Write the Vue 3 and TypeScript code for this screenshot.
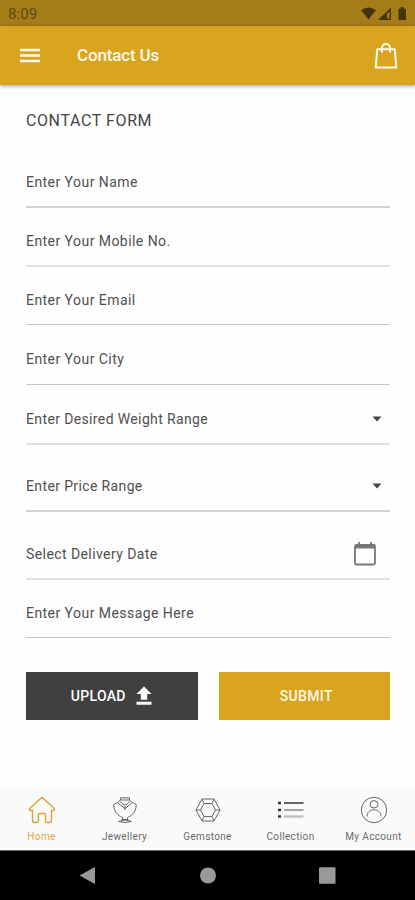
<script setup lang="ts">
import { ref } from 'vue'

type Trailing = 'none' | 'caret' | 'calendar'
interface Field { label: string; height: number; rule: string; trailing: Trailing }
interface Tab { id: string; label: string }

const fields: Field[] = [
  { label: 'Enter Your Name', height: 60, rule: 'normal', trailing: 'none' },
  { label: 'Enter Your Mobile No.', height: 59, rule: 'soft', trailing: 'none' },
  { label: 'Enter Your Email', height: 58, rule: 'thin', trailing: 'none' },
  { label: 'Enter Your City', height: 60, rule: 'thin raised', trailing: 'none' },
  { label: 'Enter Desired Weight Range', height: 60, rule: 'soft', trailing: 'caret' },
  { label: 'Enter Price Range', height: 67, rule: 'normal', trailing: 'caret' },
  { label: 'Select Delivery Date', height: 68, rule: 'soft', trailing: 'calendar' },
  { label: 'Enter Your Message Here', height: 58, rule: 'thin', trailing: 'none' },
]
const tabs: Tab[] = [
  { id: 'home', label: 'Home' },
  { id: 'jewellery', label: 'Jewellery' },
  { id: 'gemstone', label: 'Gemstone' },
  { id: 'collection', label: 'Collection' },
  { id: 'account', label: 'My Account' },
]
const active = ref('home')
</script>

<template>
  <div class="screen">
    <div class="status">
      <span class="clock">8:09</span>
      <svg class="status-icons" width="50" height="16" viewBox="0 0 50 16">
        <path d="M2 4Q9.500-1.200 17 4L9.500 13.500Z" />
        <path fill-rule="evenodd" d="M19 14 32 1.500V14ZM28 7.500V12.500H30.500V5.500Z" />
        <path d="M39.500 2.800H41.500V1.300H45V2.800H47V14H39.500Z" />
      </svg>
    </div>

    <header class="appbar">
      <svg class="menu" width="20" height="16" viewBox="0 0 20 16">
        <path d="M0 2H20M0 7.500H20M0 13H20" />
      </svg>
      <h1>Contact Us</h1>
      <svg class="bag" width="24" height="28" viewBox="0 0 24 28">
        <path d="M3.300 7.200H20.700L22.300 25.500H1.700Z" />
        <path d="M8 10.500V6a4 4 0 0 1 8 0V10.500" />
      </svg>
    </header>

    <main>
      <h2>CONTACT FORM</h2>
      <form @submit.prevent>
        <div
          v-for="f in fields"
          :key="f.label"
          class="field"
          :class="[f.rule, f.trailing]"
          :style="{ height: f.height + 'px' }"
        >
          <span class="label">{{ f.label }}</span>
          <svg v-if="f.trailing === 'caret'" class="arrow" width="10" height="6" viewBox="0 0 10 6">
            <path d="M0.500 0.500H9.500L5 5.500Z" />
          </svg>
          <svg v-else-if="f.trailing === 'calendar'" class="date-icon" width="22" height="24" viewBox="0 0 22 24">
            <rect x="1" y="3" width="20" height="19.500" rx="1.500" />
            <path class="band" d="M1 2.500H21V6.500H1Z" />
            <path d="M5 0V3.500M17 0V3.500" />
          </svg>
        </div>
        <div class="actions">
          <button type="button" class="upload">
            <span>UPLOAD</span>
            <svg width="16" height="20" viewBox="0 0 16 20">
              <path d="M8 0.500 15.500 8H11.200V13.800H4.800V8H0.500ZM0.500 15.800H15.500V18.800H0.500Z" />
            </svg>
          </button>
          <button type="submit" class="submit"><span>SUBMIT</span></button>
        </div>
      </form>
    </main>

    <nav class="tabs">
      <a v-for="t in tabs" :key="t.id" :class="['tab', t.id, { active: active === t.id }]" @click="active = t.id">
        <svg width="28" height="28" viewBox="0 0 28 28">
          <g v-if="t.id === 'home'">
            <path d="M14 1.300 26.300 12.500Q27 14.200 25.500 14.500H23.500V24.500Q23.500 26.500 21.500 26.500H19.500Q17.500 26.500 17.500 24.500V19Q17.500 17.500 16 17.500H12Q10.500 17.500 10.500 19V24.500Q10.500 26.500 8.500 26.500H6.500Q4.500 26.500 4.500 24.500V14.500H2.500Q1 14.200 1.700 12.500Z" />
          </g>
          <g v-else-if="t.id === 'jewellery'">
            <path d="M9.500 1.800H18.500M9.500 1.800V4L6.500 6.500M18.500 1.800V4L21.500 6.500M9.500 4H18.500" />
            <path d="M6.500 6.500 12 11H16L21.500 6.500M9 5.500 13 8.800H15L19 5.500" />
            <path d="M6.500 6.500 2.800 8.500C2.800 15.500 6 19 11.500 21.500V23.500M21.500 6.500 25.200 8.500C25.200 15.500 22 19 16.500 21.500V23.500M12.500 11 14 13.500 15.500 11" />
            <path d="M10.500 23.500H17.500M7.500 25.500Q14 22.500 20.500 25.500Q14 27.500 7.500 25.500Z" />
          </g>
          <g v-else-if="t.id === 'gemstone'">
            <path d="M8 3H20L26 14 20 25H8L2 14Z" />
            <path d="M10 7.500H18L21.500 14 18 20.500H10L6.500 14Z" />
            <path d="M8 3 10 7.500M20 3 18 7.500M26 14H21.500M20 25 18 20.500M8 25 10 20.500M2 14H6.500" />
          </g>
          <g v-else-if="t.id === 'collection'">
            <path class="dots" d="M1 7H4M1 14H4M1 20.500H4" />
            <path class="bar1" d="M7 7H26.500" />
            <path class="bar2" d="M7 14H26.500" />
            <path class="bar3" d="M7 20.500H26.500" />
          </g>
          <g v-else>
            <circle cx="14" cy="14" r="12.700" />
            <ellipse cx="14" cy="8.300" rx="4" ry="3.700" />
            <path d="M7 20.500C7 11.500 21 11.500 21 20.500" />
          </g>
        </svg>
        <span>{{ t.label }}</span>
      </a>
    </nav>

    <div class="system">
      <svg width="18" height="20" viewBox="0 0 18 20"><path d="M0.500 9.500 16 1V18Z" /></svg>
      <svg width="18" height="20" viewBox="0 0 18 20"><circle cx="9" cy="9.500" r="8" /></svg>
      <svg width="18" height="20" viewBox="0 0 18 20"><rect x="1" y="1.300" width="16.500" height="16.500" rx="1" /></svg>
    </div>
  </div>
</template>

<style>
body { margin: 0; background: #fff; }
</style>

<style scoped>
.screen {
  width: 415px; height: 900px; display: flex; flex-direction: column;
  font-family: Roboto, sans-serif; background: #fefefe; overflow: hidden;
}
svg { display: block; flex: none; }
.status {
  height: 26px; background: #a47d19; display: flex; align-items: center;
  justify-content: space-between; padding: 1px 6px 0 8px; box-sizing: border-box; flex: none;
}
.clock { font-size: 15px; color: #5e4812; letter-spacing: 0.1px; }
.status-icons { fill: #43340d; }
.appbar {
  height: 59px; flex: none; box-sizing: border-box; background: #d9a51e; display: flex; align-items: center;
  padding: 0 17px 0 20px; box-shadow: 0 1px 4px rgba(0, 0, 0, .4); position: relative;
}
.menu { stroke: #fffaf0; stroke-width: 2.3; }
h1 { margin: 0 auto 1px 37px; font-size: 17px; font-weight: 500; color: #fff8ea; letter-spacing: -.15px; line-height: 24px; }
.bag { fill: none; stroke: #fffaf0; stroke-width: 2; stroke-linejoin: round; }
main { flex: 1; padding: 0 25px 0 26px; }
h2 { margin: 0; padding-top: 24px; height: 39px; line-height: 24px; font-size: 16px; font-weight: 400; color: #444; letter-spacing: .6px; }
.field {
  box-sizing: border-box; display: flex; align-items: flex-end; justify-content: space-between;
  border-bottom: 2px solid #d2d2d2; padding-bottom: 14px;
}
.field.soft { border-bottom-color: #e0e0e0; }
.field.thin { border-bottom: 1px solid #c4c4c4; }
.field.raised { padding-bottom: 15px; }
.label { font-size: 14px; line-height: 20px; color: #505050; letter-spacing: .45px; }
.caret .label { letter-spacing: .37px; }
.calendar .label { letter-spacing: .42px; }
.arrow { fill: #444; margin: 0 8px 7px 0; }
.date-icon { fill: none; stroke: #777; stroke-width: 1.800; margin: 0 14px -2px 0; }
.date-icon .band { fill: #777; stroke: none; }
.actions { display: grid; grid-template-columns: 1fr 1fr; gap: 21px; padding-top: 34px; }
button {
  height: 48px; border: 0; padding: 0; display: flex; align-items: center; justify-content: center;
  gap: 10px; color: #fff; font: 500 14px Roboto, sans-serif; letter-spacing: .35px;
}
.upload { background: #404040; padding-right: 1px; }
.upload svg { fill: #fff; }
.submit { background: #d9a51e; color: #fff8e6; padding-left: 4px; }
.tabs { height: 62px; flex: none; display: grid; grid-template-columns: repeat(5, 1fr); background: #fafafa; }
.tab { display: flex; flex-direction: column; align-items: center; padding-top: 8px; font-size: 10px; color: #6a6a6a; }
.tab span { line-height: 14px; margin-top: 6px; letter-spacing: .35px; white-space: nowrap; }
.tab svg { fill: none; stroke: #666; stroke-width: 1; stroke-linejoin: round; }
.tab.active { color: #dfa548; }
.tab.active svg { stroke: #dda037; stroke-width: 1.400; }
.tab .dots { stroke: #333; stroke-width: 2.600; }
.tab .bar1 { stroke: #555; stroke-width: 1.800; }
.tab .bar2 { stroke: #999; stroke-width: 1.800; }
.tab .bar3 { stroke: #c2c2c2; stroke-width: 2.500; }
.system {
  height: 50px; flex: none; box-sizing: border-box; background: #000; border-top: 1px solid #666;
  display: flex; align-items: center; justify-content: space-between; padding: 0 79px;
}
.system svg { fill: #999; }
</style>
